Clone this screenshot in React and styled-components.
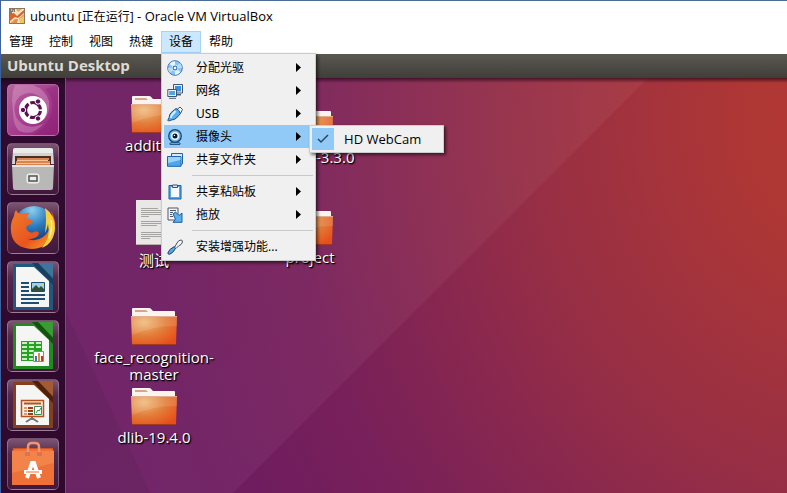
import React from 'react';
import styled, { createGlobalStyle, css } from 'styled-components';

const uiFont = '"Noto Sans", "Noto Sans CJK SC", sans-serif';
const openFont = '"Open Sans", "Noto Sans CJK SC", sans-serif';

const GlobalStyle = createGlobalStyle`
  *, *::before, *::after { box-sizing: border-box; }
  body { margin: 0; overflow: hidden; font-family: ${uiFont}; }
  button { font: inherit; color: inherit; border: 0; padding: 0; background: none; }
  svg { display: block; flex: none; }
`;

const Window = styled.div`
  display: flex;
  flex-direction: column;
  height: 100vh;
  background: #fff;
  border-top: 1px solid #4c6c98;
  border-left: 1px solid #3d61a0;
`;

const TitleBar = styled.header`
  display: flex;
  align-items: center;
  gap: 5px;
  height: 30px;
  flex: none;
  padding-left: 8px;
`;

const WindowTitle = styled.h1`
  margin: 0;
  font-family: ${openFont};
  font-size: 13px;
  font-weight: 400;
  line-height: 16px;
  color: #000;
  white-space: nowrap;
`;

const WindowState = styled.span`
  font-size: 12px;
`;

const MenuBar = styled.nav`
  display: flex;
  height: 23px;
  flex: none;
`;

const MenuSlot = styled.div`
  position: relative;
  display: flex;
`;

const MenuBarButton = styled.button`
  padding: 0 8px;
  height: 22px;
  font-size: 12px;
  line-height: 22px;
  color: #000;
  ${({ $open }) =>
    $open &&
    css`
      background: #cce8ff;
      box-shadow: inset 0 0 0 1px #a6d3f7;
    `}
`;

const Popup = styled.div`
  position: absolute;
  z-index: 5;
  display: flex;
  flex-direction: column;
  padding: 2px;
  background: #f0f0f0;
  border: 1px solid #ccc;
  box-shadow: 2px 2px 3px rgba(0, 0, 0, 0.55);
`;

const DeviceMenu = styled(Popup)`
  top: 22px;
  left: 0;
  width: 155px;
`;

const SubMenu = styled(Popup)`
  top: 0;
  left: 145px;
  width: 135px;
`;

const MenuRow = styled.div`
  position: relative;
  display: flex;
  flex-direction: column;
`;

const MenuItem = styled.button`
  display: grid;
  grid-template-columns: 32px 1fr 18px;
  align-items: center;
  height: 23px;
  font-size: 12px;
  line-height: 18px;
  text-align: left;
  white-space: nowrap;
  color: #000;
  background: ${({ $active }) => ($active ? '#91c9f7' : 'transparent')};
`;

const ItemIcon = styled.span`
  padding-left: 3px;
`;

const Separator = styled.hr`
  width: auto;
  height: 1px;
  margin: 4px 0 4px 28px;
  border: 0;
  background: #c9c9c9;
`;

const CheckItem = styled.label`
  display: grid;
  grid-template-columns: 22px 1fr;
  align-items: center;
  column-gap: 10px;
  height: 22px;
  font-family: ${openFont};
  font-size: 13px;
  line-height: 20px;
  color: #000;
  white-space: nowrap;
`;

const CheckBox = styled.input`
  grid-area: 1 / 1;
  appearance: none;
  width: 22px;
  height: 22px;
  margin: 0;
  background: #91c9f7;
`;

const CheckMark = styled.svg`
  grid-area: 1 / 1;
  justify-self: center;
  pointer-events: none;
`;

const Guest = styled.main`
  display: flex;
  flex-direction: column;
  flex: 1;
  min-height: 0;
  color: #fff;
`;

const GuestPanel = styled.header`
  flex: none;
  height: 24px;
  padding-left: 6px;
  font-family: ${openFont};
  font-size: 15px;
  font-weight: 700;
  line-height: 23px;
  color: #dfdbd2;
  background: linear-gradient(#5b5850, #3f3e39);
`;

const GuestBody = styled.div`
  display: flex;
  flex: 1;
  min-height: 0;
`;

const Launcher = styled.aside`
  display: flex;
  flex-direction: column;
  flex: none;
  gap: 7px;
  width: 65px;
  padding: 6px 6px 0;
  overflow: hidden;
  background: linear-gradient(#1c0818, #300a30 7px, #31092f);
  border-right: 1px solid #7b4a75;
`;

const LauncherTile = styled.button`
  flex: none;
  width: 52px;
  height: 52px;
  border-radius: 5px;
  overflow: hidden;
  border: 1px solid rgba(255, 255, 255, 0.25);
  background: ${({ $tone }) => $tone};
`;

const Desktop = styled.section`
  position: relative;
  flex: 1;
  overflow: hidden;
  background:
    linear-gradient(rgba(30, 0, 20, 0.65), transparent 5px),
    linear-gradient(65deg, rgba(50, 30, 60, 0.12) 76px, transparent 77px),
    linear-gradient(135deg, rgba(255, 255, 255, 0.04) 0, rgba(255, 255, 255, 0.045) 411px, transparent 412px),
    radial-gradient(
      ellipse 800px 900px at 794px 42px,
      #b43832 0, #ae3735 15%, #982f44 40%, #8e2a4b 50%, #78205a 71%, #6d1c60 90%, #6c1c63 100%
    );
`;

const DesktopItem = styled.figure`
  position: absolute;
  top: ${({ $y }) => $y}px;
  left: ${({ $x }) => $x}px;
  display: flex;
  flex-direction: column;
  align-items: center;
  gap: 4px;
  width: 156px;
  margin: 0;
`;

const DesktopLabel = styled.figcaption`
  font-family: ${openFont};
  font-size: 15px;
  line-height: 17px;
  text-align: center;
  white-space: pre-line;
  text-shadow: 1px 1px 1px #000, 1px 1px 2px rgba(0, 0, 0, 0.7);
`;

function AppIcon() {
  return (
    <svg width="16" height="16" viewBox="0 0 16 16" aria-hidden="true">
      <rect x=".5" y=".5" width="15" height="15" fill="#e9a15c" stroke="#8c765c" />
      <path d="M1 1h6l2 3 4-3h2v5l-5 4 2 5H8L6 11l-5 4z" fill="#fbe3c3" />
      <path d="M1 6l4-1 3 3 7-6v3L9 10l-3-1-5 4z" fill="#d5652b" />
      <path d="M4 15l2-4 3 0-1 4z" fill="#e88a4a" />
      <path d="M1 1h5v3H3v2H1z" fill="#7c7a77" />
      <path d="M2 2h1M4 3h1" stroke="#fff" />
      <path d="M10 11l5-3v7h-4z" fill="#f2c65c" />
    </svg>
  );
}

const menuArt = {
  disc: (
    <>
      <circle cx="8" cy="8" r="7.300" fill="#8cc4f0" stroke="#3a78bb" />
      <path d="M8 8L2.500 4A6.800 6.800 0 0 1 8 1.200zM8 8l5.500 4A6.800 6.800 0 0 1 8 14.800z" fill="#eaf6ff" />
      <path d="M8 8l5-5a7 7 0 0 1 2 5zM8 8l-5 5a7 7 0 0 1-2-5z" fill="#b6dcf8" />
      <circle cx="8" cy="8" r="3" fill="#2f7cc8" stroke="#cfe8fb" />
      <circle cx="8" cy="8" r="1.300" fill="#fff" />
    </>
  ),
  network: (
    <>
      <path d="M9 11h5v1.500H9z" fill="#4a5f73" />
      <path d="M6.500 1.500h9v8.500h-9z" fill="#eef4f8" stroke="#3c566e" />
      <path d="M8 3h6v5.500H8z" fill="#3a8fe0" />
      <path d="M.8 6.500h8.700v7H.8z" fill="#eef4f8" stroke="#3c566e" />
      <path d="M2.200 8h5.800v4H2.200z" fill="#4fa3ea" />
      <path d="M2 15.300h7" stroke="#4a5f73" />
    </>
  ),
  usb: (
    <>
      <path d="M10 3.500L13 1l2.500 2.500-2 4z" fill="#f4f7fa" stroke="#44586c" />
      <path d="M9 2.500q3 1 4.500 5l-4 4.500q-2.500 2-5 2L1.500 15l-.7-.7 1.400-3q0-2.800 2-4.800z" fill="#5dadec" stroke="#1e4f82" />
      <path d="M8.500 5L5 9q-1 1.300-1.200 2.800" stroke="#d9f0ff" strokeWidth="2" />
    </>
  ),
  webcam: (
    <>
      <path d="M3 15.300c-1-3.300 11-3.300 10 0z" fill="#7cc0f4" stroke="#16406b" />
      <circle cx="8" cy="7" r="6.300" fill="#69b6f1" stroke="#16406b" strokeWidth="1.200" />
      <circle cx="8" cy="7" r="4" fill="#eef8ff" />
      <circle cx="8" cy="7" r="2.500" fill="#0a1a2c" />
      <circle cx="7.400" cy="6.400" r=".7" fill="#fff" />
    </>
  ),
  folder: (
    <>
      <path d="M4.500 5V1.500h11V12l-1.500 1" fill="#d4ecfd" stroke="#1d64a8" />
      <path d="M.5 4.500h13.500v9.800H.5z" fill="#4ea7ee" stroke="#1d64a8" />
      <path d="M1 5h12.500v3L1 11z" fill="#9bd2f9" />
    </>
  ),
  clipboard: (
    <>
      <path d="M2 1.500h12v13.500H2z" fill="#55a8ec" stroke="#1d5c9a" />
      <path d="M4 3h8v10H4z" fill="#f4faff" />
      <path d="M5.500 1h5v2.500h-5z" fill="#e1eaf2" stroke="#36526f" />
    </>
  ),
  drag: (
    <>
      <path d="M1 1h10v12H1z" fill="#f3f5f7" stroke="#4c5965" />
      <path d="M3 3.500h6M3 5.500h3M3 7.500h2M3 9.500h3" stroke="#4c5965" />
      <path d="M6 7l2.500-2 3.500 3.500 3-2.500v9.300H6l2.500-3z" fill="#5bafee" stroke="#1d5c9a" />
    </>
  ),
  tools: (
    <>
      <path d="M7.500 7.500Q2 10 .8 14q.3 1.700 2 1.200 3-.8 6-6.200z" fill="#58a9e8" stroke="#1d3f61" />
      <path d="M7.500 8.500L10 4q1.500-3 4-3 1.800.3 1.500 2-.8 2.800-4 4L9 9.500z" fill="#f4f5f6" stroke="#49545f" />
    </>
  ),
};

function MenuIcon({ name }) {
  return (
    <svg width="16" height="16" viewBox="0 0 16 16" fill="none" aria-hidden="true">
      {menuArt[name]}
    </svg>
  );
}

function Arrow() {
  return (
    <svg width="6" height="9" viewBox="0 0 6 9" aria-hidden="true">
      <path d="M1 0l5 4.500-5 4.500z" fill="#000" />
    </svg>
  );
}

function Folder() {
  return (
    <svg width="46" height="37" viewBox="0 0 46 37" aria-hidden="true">
      <defs>
        <radialGradient id="folderFace" cx=".28" cy=".22" r=".9">
          <stop offset="0" stopColor="#eebb7c" />
          <stop offset=".5" stopColor="#e27f3b" />
          <stop offset="1" stopColor="#e84e18" />
        </radialGradient>
      </defs>
      <path d="M1 9V1q0-1 1-1h16q2 0 3 2l1 1h21q1 0 1 1v6z" fill="#f9f4f0" />
      <path d="M4 2h11l2 2H4z" fill="#d6a58b" />
      <path d="M0 8h46l-1 28q0 1-1 1H2q-1 0-1-1z" fill="url(#folderFace)" />
      <path d="M0 8h46v10Q22 18 1 27z" fill="#fff" opacity=".12" />
      <path d="M0 8.500h46" stroke="#e5ae8c" />
      <path d="M1 36.500h44" stroke="#9c3b20" />
    </svg>
  );
}

function TextFile() {
  return (
    <svg width="36" height="48" viewBox="0 0 36 48" aria-hidden="true">
      <path d="M0 0h28l8 8v37H0z" fill="#e9e8e6" />
      <path d="M28 0v8h8z" fill="#c7c5c2" />
      <path
        d="M5 8.500h17M5 10.500h20M5 12.500h20M5 14.500h20M5 16.500h8M5 21.500h20M5 23.500h22M5 25.500h16M5 32.500h20M5 34.500h22M5 36.500h21M5 38.500h9"
        stroke="#a6a4a1"
      />
      <path d="M0 44.500h36" stroke="#b3b0ad" />
    </svg>
  );
}

const launcherArt = {
  dash: (
    <>
      <path d="M8 0h18Q38 4 42 16q2 12-6 20Q42 24 34 13 24 4 13 11 5 18 8 32 2 14 8 0z" fill="#e9b3d8" opacity=".35" />
      <path d="M7 20q-1 12 8 19 10 6 22-1Q26 52 12 46 4 38 7 20z" fill="#f0c0df" opacity=".3" />
      <path d="M38 4q12 12 5 28-5 12-18 18h27V0z" fill="#7d1565" opacity=".25" />
      <circle cx="26" cy="25" r="14" fill="#fff" />
      <circle cx="26" cy="25" r="7.500" fill="none" stroke="#5a1150" strokeWidth="3.200" strokeDasharray="13.700 2" strokeDashoffset="-1" />
      <g fill="#5a1150" stroke="#fff" strokeWidth="1">
        <circle cx="16" cy="25" r="2.700" />
        <circle cx="31" cy="16.500" r="2.700" />
        <circle cx="31" cy="33.500" r="2.700" />
      </g>
    </>
  ),
  files: (
    <>
      <path d="M5 20L6 6q0-2 3-2h34q3 0 3 2l1 14z" fill="#d3d3d1" />
      <path d="M6 6q0-2 3-2h34q3 0 3 2l0 3H6z" fill="#ebebe9" />
      <path d="M8 12h36v10H8z" fill="#4a3024" />
      <path d="M10 14h32v2H10zM9 17h34v5H9z" fill="#d98350" />
      <path d="M10 16h31v1H10zM9 19h34v1H9z" fill="#f5c394" />
      <path d="M5 21h42l-1 23q0 2-2 2H8q-2 0-2-2z" fill="#b8b8b6" />
      <path d="M5 21h42v2H5z" fill="#e3e3e1" />
      <rect x="20" y="30" width="12" height="9" rx="2" fill="#ddd" stroke="#f6f6f4" />
      <rect x="22" y="32" width="8" height="5" fill="#eee" stroke="#555" strokeWidth="1.500" />
    </>
  ),
  firefox: (
    <>
      <defs>
        <radialGradient id="globe" cx=".45" cy=".1" r=".8">
          <stop offset="0" stopColor="#8bd0f0" />
          <stop offset=".5" stopColor="#2f7fc0" />
          <stop offset="1" stopColor="#143a7c" />
        </radialGradient>
        <linearGradient id="fox" x1="0" y1="0" x2="1" y2="1">
          <stop offset="0" stopColor="#ef7d2d" />
          <stop offset=".6" stopColor="#e9541f" />
          <stop offset="1" stopColor="#f6b12b" />
        </linearGradient>
      </defs>
      <circle cx="27" cy="23" r="20" fill="url(#globe)" />
      <path d="M7 13q0-3 2-6 2 4 5 4 5-2 9-1-3 2-4 5 4 1 7 3-1 3-5 4-3 2-1 5 3 4 7 2 3-2 5 1-1 4-5 5-4 2-8 0 9 5 17-1 8-6 9-17 1-7-3-12 7 9 6 20-3 20-23 21Q6 45 4 29q-1-9 3-16z" fill="url(#fox)" />
      <path d="M38 5q10 7 10 20-1 15-13 20 9-11 6-24-1 5-3 9 2-15 0-25z" fill="#f9cf3b" />
      <path d="M44 17q2 9-2 18" fill="none" stroke="#fff0a0" strokeWidth="1.500" />
    </>
  ),
  writer: (
    <>
      <path d="M6 2h40v46H6z" fill="#24577f" />
      <path d="M31 1h15v15z" fill="#3f749c" />
      <path d="M25 1h6l15 16v6z" fill="#173f60" />
      <path d="M9 5h18l15 14v26H9z" fill="#f5f5f3" />
      <path d="M14 21h8M14 25h8M14 29h8M14 33h24M14 37h24M14 41h18" stroke="#1c4f70" strokeWidth="2" />
      <path d="M24.500 20.500h13v9h-13z" fill="#9fd2ea" stroke="#1c4f70" />
      <path d="M25 29v-2l4-4 3 3 2-2 3 3v2z" fill="#31503b" />
      <circle cx="35" cy="22.500" r="1" fill="#f4d13d" />
    </>
  ),
  calc: (
    <>
      <path d="M6 2h40v46H6z" fill="#1f8c1f" />
      <path d="M31 1h15v15z" fill="#3a9a35" />
      <path d="M25 1h6l15 16v6z" fill="#14520f" />
      <path d="M9 5h18l15 14v26H9z" fill="#f5f5f3" />
      <path d="M14 20h21v20H14z" fill="#27a126" />
      <path d="M15 22h5M22 22h5M29 22h5M15 26h5M22 26h5M29 26h5M15 30h5M22 30h5M15 34h5M22 34h5M15 38h5M22 38h5" stroke="#c8f0bd" strokeWidth="2" />
      <path d="M26.500 30.500h10v10h-10z" fill="#fff" stroke="#888" />
      <path d="M29 40v-5" stroke="#3278c0" strokeWidth="2" />
      <path d="M32 40v-8" stroke="#f08a22" strokeWidth="2" />
      <path d="M35 40v-5" stroke="#c03a2c" strokeWidth="2" />
    </>
  ),
  impress: (
    <>
      <path d="M6 2h40v46H6z" fill="#84401d" />
      <path d="M31 1h15v15z" fill="#a35b33" />
      <path d="M25 1h6l15 16v6z" fill="#4d200c" />
      <path d="M9 5h18l15 14v26H9z" fill="#f5f5f3" />
      <path d="M25 38l-6 4M25 38l6 4M25 36v4" stroke="#777" strokeWidth="2" />
      <path d="M14.500 20.500h22v16h-22z" fill="#faf1e6" stroke="#b4501e" strokeWidth="1.500" />
      <path d="M17 23.500h17" stroke="#b4501e" strokeWidth="2" />
      <path d="M17 28h3M17 31h3M17 34h3" stroke="#dd9a70" strokeWidth="2" />
      <path d="M21 28h5M21 31h5M21 34h5" stroke="#9c3f16" strokeWidth="2" />
      <path d="M27.500 26.500h7v8h-7z" fill="#fff" stroke="#3d8a50" />
      <path d="M29 33l2-3 1 1 2-3" stroke="#2b8d3f" fill="none" />
    </>
  ),
  store: (
    <>
      <path d="M6 9h40l1 7H5z" fill="#cf5423" />
      <path d="M5 12l3-2h36l3 2v34H5z" fill="#ee7138" />
      <path d="M5 12h42v12L5 34z" fill="#f6965c" opacity=".5" />
      <path d="M21 16V8q0-4 4-4h3q4 0 4 4v8" fill="none" stroke="#ee9672" strokeWidth="2.500" />
      <path d="M18 13h5v4h-5zM30 13h5v4h-5z" fill="#dc7250" />
      <path d="M20 39l5-15h2l5 15" fill="none" stroke="#fff" strokeWidth="4" />
      <path d="M17 33h18" stroke="#fff" strokeWidth="4" />
      <path d="M19 33h13" stroke="#ee7138" strokeWidth="1" />
    </>
  ),
};

const glossyTile = 'linear-gradient(#7d5673, #55284d 30%, #43183d)';

const launcherItems = [
  { id: 'dash', name: 'Dash', tone: 'linear-gradient(135deg, #b5669c, #a3388c 60%, #94287d)' },
  { id: 'files', name: 'Files', tone: glossyTile },
  { id: 'firefox', name: 'Firefox', tone: glossyTile },
  { id: 'writer', name: 'LibreOffice Writer', tone: glossyTile },
  { id: 'calc', name: 'LibreOffice Calc', tone: glossyTile },
  { id: 'impress', name: 'LibreOffice Impress', tone: glossyTile },
  { id: 'store', name: 'Ubuntu Software', tone: glossyTile },
];

const desktopItems = [
  { label: 'addition', x: 10, y: 18, art: Folder },
  { label: '测试', x: 10, y: 122, art: TextFile },
  { label: 'face_recognition-\nmaster', x: 10, y: 230, art: Folder },
  { label: 'dlib-19.4.0', x: 10, y: 310, art: Folder },
  { label: 'opencv-3.3.0', x: 166, y: 30, art: Folder },
  { label: 'project', x: 166, y: 130, art: Folder },
];

const deviceGroups = [
  [
    { label: '分配光驱', icon: 'disc', more: true },
    { label: '网络', icon: 'network', more: true },
    { label: 'USB', icon: 'usb', more: true },
    { label: '摄像头', icon: 'webcam', more: true, webcams: ['HD WebCam'] },
    { label: '共享文件夹', icon: 'folder', more: true },
  ],
  [
    { label: '共享粘贴板', icon: 'clipboard', more: true },
    { label: '拖放', icon: 'drag', more: true },
  ],
  [{ label: '安装增强功能...', icon: 'tools' }],
];

function WebcamMenu({ names }) {
  return (
    <SubMenu>
      {names.map((name) => (
        <CheckItem key={name}>
          <CheckBox type="checkbox" defaultChecked />
          <CheckMark width="12" height="10" viewBox="0 0 12 10" aria-hidden="true">
            <path d="M1 5l3 3 7-7" fill="none" stroke="#28485f" strokeWidth="1.500" />
          </CheckMark>
          {name}
        </CheckItem>
      ))}
    </SubMenu>
  );
}

function DevicesDropdown() {
  return (
    <DeviceMenu>
      {deviceGroups.map((group, index) => (
        <React.Fragment key={group[0].label}>
          {index > 0 && <Separator />}
          {group.map(({ label, icon, more, webcams }) => (
            <MenuRow key={label}>
              <MenuItem type="button" $active={Boolean(webcams)}>
                <ItemIcon>
                  <MenuIcon name={icon} />
                </ItemIcon>
                {label}
                {more && <Arrow />}
              </MenuItem>
              {webcams && <WebcamMenu names={webcams} />}
            </MenuRow>
          ))}
        </React.Fragment>
      ))}
    </DeviceMenu>
  );
}

export default function App() {
  return (
    <Window>
      <GlobalStyle />
      <TitleBar>
        <AppIcon />
        <WindowTitle>
          ubuntu <WindowState>[正在运行]</WindowState> - Oracle VM VirtualBox
        </WindowTitle>
      </TitleBar>
      <MenuBar>
        {['管理', '控制', '视图', '热键', '设备', '帮助'].map((label) => (
          <MenuSlot key={label}>
            <MenuBarButton type="button" $open={label === '设备'}>
              {label}
            </MenuBarButton>
            {label === '设备' && <DevicesDropdown />}
          </MenuSlot>
        ))}
      </MenuBar>
      <Guest>
        <GuestPanel>Ubuntu Desktop</GuestPanel>
        <GuestBody>
          <Launcher>
            {launcherItems.map(({ id, name, tone }) => (
              <LauncherTile key={id} type="button" aria-label={name} $tone={tone}>
                <svg width="50" height="50" viewBox="1 0 50 50" aria-hidden="true">
                  {launcherArt[id]}
                </svg>
              </LauncherTile>
            ))}
          </Launcher>
          <Desktop>
            {desktopItems.map(({ label, x, y, art: Art }) => (
              <DesktopItem key={label} $x={x} $y={y}>
                <Art />
                <DesktopLabel>{label}</DesktopLabel>
              </DesktopItem>
            ))}
          </Desktop>
        </GuestBody>
      </Guest>
    </Window>
  );
}
